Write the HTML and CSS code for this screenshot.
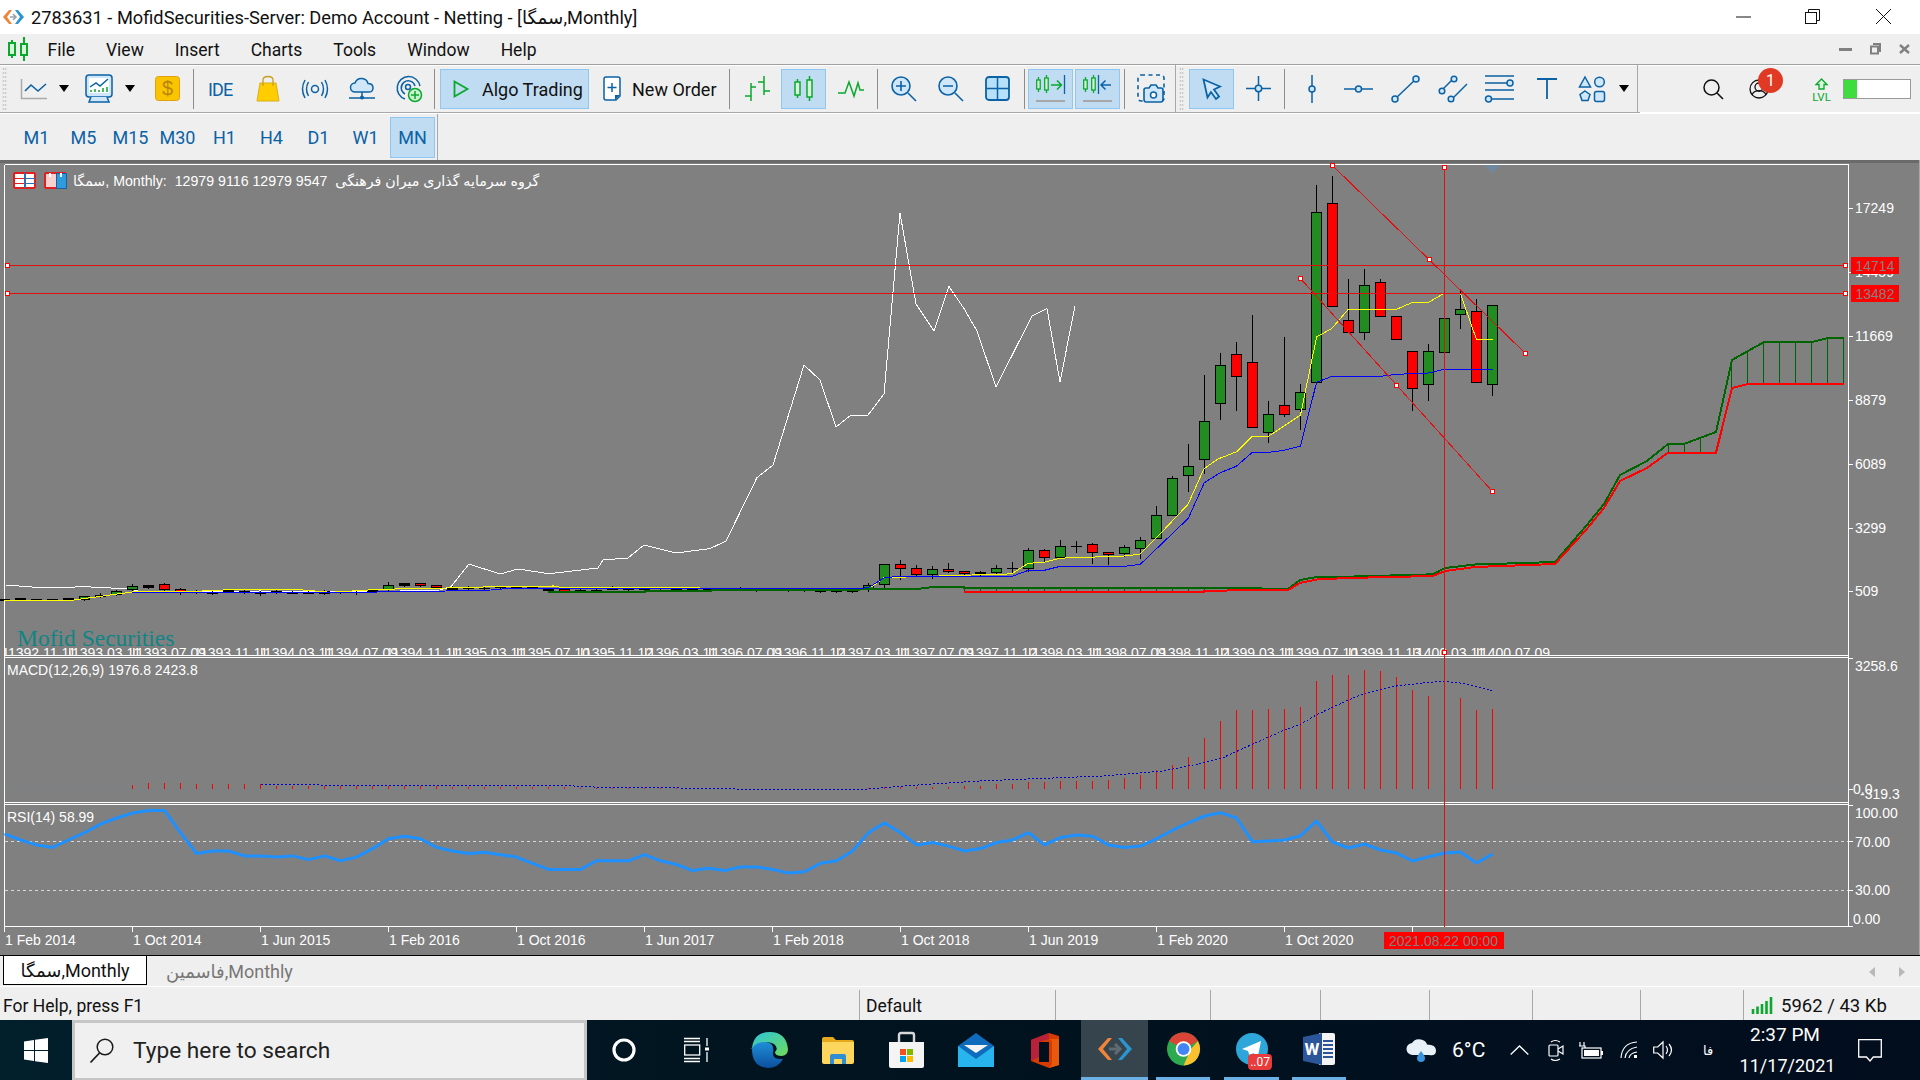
FILE: index.html
```html
<!DOCTYPE html>
<html lang="en">
<head>
<meta charset="utf-8">
<title>MetaTrader 5</title>
<link rel="stylesheet" href="styles.css">
</head>
<body>
<div class="app">

<header class="titlebar">
  <svg class="ml2" width="23" height="16" viewBox="0 0 23 16"><path d="M7 1 1 8l6 7h3L5 8l5-7z" fill="#f0853a"/><path d="M16 1l6 7-6 7h-3l5-7-5-7z" fill="#2c94cf"/><path d="M8 8h6M11 5l3 3-3 3" stroke="#9aa3aa" stroke-width="1.6" fill="none"/></svg>
  <span class="title-text">2783631 - MofidSecurities-Server: Demo Account - Netting - [سمگا,Monthly]</span>
  <svg class="win-min" width="15" height="2" viewBox="0 0 15 2"><path d="M0 1h15" stroke="#111"/></svg>
  <svg class="win-max" width="15" height="15" viewBox="0 0 15 15"><rect x=".5" y="3.5" width="11" height="11" fill="#fff" stroke="#111"/><path d="M3.5 3V.5h11v11H12" fill="none" stroke="#111"/></svg>
  <svg class="win-close" width="15" height="15" viewBox="0 0 15 15"><path d="M0 0l15 15M15 0 0 15" stroke="#111"/></svg>
</header>

<nav class="menubar">
  <svg class="menu-logo" width="20" height="24" viewBox="0 0 20 24"><g fill="none" stroke="#0aa82d" stroke-width="2"><rect x="1" y="6" width="6" height="12" fill="#d8f5dc"/><rect x="13" y="7" width="6" height="11" fill="#d8f5dc"/><path d="M4 3v3M4 18v3M16 0v7M16 18v6"/></g></svg>
  <div class="menu-items"><span>File</span><span>View</span><span>Insert</span><span>Charts</span><span>Tools</span><span>Window</span><span>Help</span></div>
  <div class="mdi">
    <svg width="13" height="3" viewBox="0 0 13 3"><rect width="13" height="3" fill="#808080"/></svg>
    <svg class="mdi-max" width="11" height="12" viewBox="0 0 11 12"><path d="M3 1h7v8M1 3.500h7v7H1z" fill="none" stroke="#808080" stroke-width="2"/></svg>
    <svg class="mdi-close" width="11" height="10" viewBox="0 0 11 10"><path d="M1 1l9 8M10 1l-9 8" stroke="#808080" stroke-width="2.400"/></svg>
  </div>
</nav>

<section class="toolbar">
  <div class="tools">
    <i class="grip ml2"></i>
    <svg class="ml14" width="26" height="20" viewBox="0 0 26 20"><path d="M.5 0v19.500H26" fill="none" stroke="#aaa" stroke-width="1.500"/><path d="M4 12l6-6 7 6 8-7" fill="none" stroke="#0b62a5" stroke-width="1.600"/></svg>
    <i class="drop ml12"></i>
    <svg class="ml16" width="28" height="29" viewBox="0 0 28 29"><rect x="1" y="1" width="26" height="22" rx="3" fill="#cfe7f8" stroke="#0b62a5" stroke-width="1.500"/><rect x="4" y="4" width="20" height="15" fill="#fff"/><path d="M5 13l6-4 4 3 8-7" fill="none" stroke="#0b62a5" stroke-width="1.500"/><path d="M6 16v2M10 15v3M14 16v2M18 14v4M22 13v5" stroke="#0aa82d" stroke-width="1.500"/><path d="M6 23l-2 5h20l-2-5" fill="#cfe7f8" stroke="#0b62a5" stroke-width="1.500"/></svg>
    <i class="drop ml12"></i>
    <svg class="ml20" width="25" height="25" viewBox="0 0 25 25"><rect x=".5" y=".5" width="24" height="24" rx="3" fill="#fbc400" stroke="#e0a010"/><text class="dollar" x="12.500" y="19">$</text></svg>
    <i class="sep ml13"></i>
    <span class="ide ml14">IDE</span>
    <svg class="ml24" width="22" height="25" viewBox="0 0 22 25"><path d="M3 7h16l3 18H0z" fill="#ffcd00" stroke="#d9ae1a"/><path d="M6 10V4q0-3.500 5-3.500T16 4v6" fill="none" stroke="#c8a020" stroke-width="1.300"/></svg>
    <svg class="ml23" width="26" height="18" viewBox="0 0 26 18"><g fill="none" stroke="#0b62a5" stroke-width="1.500"><circle cx="13" cy="9" r="3.500"/><path d="M6.500 2q-4 7 0 14M19.500 2q4 7 0 14M3 0q-5 9 0 18M23 0q5 9 0 18"/></g></svg>
    <svg class="ml21" width="26" height="22" viewBox="0 0 26 22"><path d="M6 14a4.500 4.500 0 0 1 0-9q2-5 7-4.500 5 .5 6 5 5 0 5 4.500T19 14z" fill="#cfe7f8" stroke="#0b62a5" stroke-width="1.500"/><path d="M13 14v4M0 20h26" stroke="#0b62a5" stroke-width="1.500"/><circle cx="13" cy="19.500" r="2" fill="#0b62a5"/></svg>
    <svg class="ml21" width="26" height="27" viewBox="0 0 26 27"><g fill="none" stroke="#0b62a5" stroke-width="1.500"><path d="M9 24A11.500 11.500 0 1 1 24 11"/><path d="M9 19A7 7 0 1 1 19 11"/><circle cx="12" cy="12" r="2.500"/></g><circle cx="19" cy="20" r="6.500" fill="#c9f1cf" stroke="#0aa82d" stroke-width="1.500"/><path d="M19 16v8M15 20h8" stroke="#0aa82d" stroke-width="1.500"/></svg>
    <i class="sep ml12"></i>
    <div class="algo ml5"><svg width="16" height="18" viewBox="0 0 16 18"><path d="M1.500 1.500v15l13-7.500z" fill="none" stroke="#0aa82d" stroke-width="1.800"/></svg><span>Algo Trading</span></div>
    <svg class="ml14" width="18" height="25" viewBox="0 0 18 25"><path d="M3 1h12q2 0 2 2v17l-4 4H3q-2 0-2-2V3q0-2 2-2z" fill="#fff" stroke="#0b62a5" stroke-width="1.500"/><path d="M9 7v9M4.500 11.500h9" stroke="#0b62a5" stroke-width="1.500"/><path d="M17 19l-5 5v-5z" fill="#0b62a5"/></svg>
    <span class="label ml11">New Order</span>
    <i class="sep ml12"></i>
    <svg class="ml14" width="26" height="25" viewBox="0 0 26 25"><path d="M7 7v18M1 20h6M7 11h5M20 0v19M14 6h6M20 15h6" fill="none" stroke="#0aa82d" stroke-width="1.500"/></svg>
    <div class="active ml11"><svg width="19" height="25" viewBox="0 0 19 25"><g fill="#d8f7dc" stroke="#0aa82d" stroke-width="1.500"><path d="M3.500 3v19M15.500 0v25"/><rect x="1" y="6" width="5" height="13"/><rect x="13" y="4" width="5" height="17"/></g></svg></div>
    <svg class="ml12" width="26" height="17" viewBox="0 0 26 17"><path d="M0 13h4l3 0 4-11 5 14 4-13 2 7h4" fill="none" stroke="#0aa82d" stroke-width="1.500"/></svg>
    <i class="sep ml13"></i>
    <svg class="ml13" width="26" height="25" viewBox="0 0 26 25"><circle cx="10" cy="10" r="9" fill="#cfe7f8" stroke="#0b62a5" stroke-width="1.600"/><path d="M10 5v10M5 10h10M17 17l8 8" stroke="#0b62a5" stroke-width="1.600"/></svg>
    <svg class="ml21" width="26" height="25" viewBox="0 0 26 25"><circle cx="10" cy="10" r="9" fill="#cfe7f8" stroke="#0b62a5" stroke-width="1.600"/><path d="M5 10h10M17 17l8 8" stroke="#0b62a5" stroke-width="1.600"/></svg>
    <svg class="ml21" width="25" height="25" viewBox="0 0 25 25"><rect x="1" y="1" width="23" height="23" rx="3" fill="#b7e0fb" stroke="#0b62a5" stroke-width="1.800"/><path d="M12.500 1v23M1 12.500h23" stroke="#0b62a5" stroke-width="1.500"/></svg>
    <i class="sep ml14"></i>
    <div class="active ml3"><svg width="29" height="27" viewBox="0 0 29 27"><g fill="#d8f7dc" stroke="#0aa82d" stroke-width="1.300"><path d="M2.500 2v15M10.500 0v18"/><rect x=".7" y="5" width="3.500" height="9"/><rect x="8.700" y="3" width="3.500" height="12"/></g><path d="M15 10h10M21 5.500l4.500 4.500-4.500 4.500" fill="none" stroke="#0aa82d" stroke-width="1.500"/><path d="M28.500 0v19" stroke="#0b62a5" stroke-width="1.300"/><path d="M0 26h29" stroke="#a8a8a8" stroke-width="2"/></svg></div>
    <div class="active ml2"><svg width="29" height="27" viewBox="0 0 29 27"><g fill="#d8f7dc" stroke="#0aa82d" stroke-width="1.300"><path d="M2.500 2v15M10.500 0v18"/><rect x=".7" y="5" width="3.500" height="9"/><rect x="8.700" y="3" width="3.500" height="12"/></g><path d="M18 10h10M22.500 5.500 18 10l4.500 4.500" fill="none" stroke="#0b62a5" stroke-width="1.500"/><path d="M15.500 0v19" stroke="#0b62a5" stroke-width="1.300"/><path d="M0 26h29" stroke="#a8a8a8" stroke-width="2"/></svg></div>
    <i class="sep ml4"></i>
    <svg class="ml12" width="28" height="29" viewBox="0 0 28 29"><rect x="1" y="1" width="26" height="26" rx="3" fill="none" stroke="#0b62a5" stroke-width="1.600" stroke-dasharray="4 3.500"/><path d="M9 14h3l2-3h5l2 3h3q2 0 2 2v9q0 3-2 3H9q-2 0-2-3v-9q0-2 2-2z" fill="#cfe7f8" stroke="#0b62a5" stroke-width="1.600"/><circle cx="16.500" cy="21" r="3" fill="#fff" stroke="#0b62a5" stroke-width="1.500"/></svg>
    <i class="tool-end ml10"></i>
    <i class="grip ml3"></i>
    <div class="active ml5"><svg width="20" height="22" viewBox="0 0 20 22"><path d="M1.500 1.500 18 8.500l-6 3 5 7-3 2.500-5-7-3.500 5.500z" fill="#cfe7f8" stroke="#0b62a5" stroke-width="1.800"/></svg></div>
    <svg class="ml12" width="25" height="25" viewBox="0 0 25 25"><path d="M12.500 0v9M12.500 16v9M0 12.500h9M16 12.500h9" stroke="#0b62a5" stroke-width="1.500"/><circle cx="12.500" cy="12.500" r="3.200" fill="#cfe7f8" stroke="#0b62a5" stroke-width="1.500"/></svg>
    <i class="sep ml13"></i>
    <svg class="ml14" width="26" height="28" viewBox="0 0 26 28"><path d="M13 0v28" stroke="#0b62a5" stroke-width="1.500"/><circle cx="13" cy="14" r="3" fill="#cfe7f8" stroke="#0b62a5" stroke-width="1.500"/></svg>
    <svg class="ml19" width="29" height="8" viewBox="0 0 29 8"><path d="M0 4h29" stroke="#0b62a5" stroke-width="1.500"/><circle cx="14.500" cy="4" r="3" fill="#cfe7f8" stroke="#0b62a5" stroke-width="1.500"/></svg>
    <svg class="ml18" width="29" height="28" viewBox="0 0 29 28"><path d="M4 24 25 4" stroke="#0b62a5" stroke-width="1.500"/><g fill="#cfe7f8" stroke="#0b62a5" stroke-width="1.500"><circle cx="4" cy="24" r="3"/><circle cx="25" cy="4" r="3"/></g></svg>
    <svg class="ml19" width="28" height="28" viewBox="0 0 28 28"><path d="M3 15 14 4M12 25 28 9" stroke="#0b62a5" stroke-width="1.500"/><g fill="#cfe7f8" stroke="#0b62a5" stroke-width="1.500"><circle cx="3" cy="16" r="2.800"/><circle cx="15" cy="4" r="2.800"/><circle cx="12" cy="24" r="2.800"/></g></svg>
    <svg class="ml18" width="29" height="28" viewBox="0 0 29 28"><path d="M0 1h29M0 8h26M0 15h29M6 24h23" stroke="#0b62a5" stroke-width="1.500"/><g fill="#cfe7f8" stroke="#0b62a5" stroke-width="1.500"><circle cx="25" cy="8" r="3"/><circle cx="3.500" cy="24" r="3"/></g></svg>
    <svg class="ml23" width="20" height="21" viewBox="0 0 20 21"><path d="M0 1h20M10 1v20" stroke="#0b62a5" stroke-width="1.800"/></svg>
    <svg class="ml22" width="26" height="26" viewBox="0 0 26 26"><g fill="#cfe7f8" stroke="#0b62a5" stroke-width="1.500"><path d="M6 1l5.500 10H.5z"/><circle cx="20.500" cy="6" r="4.800"/><path d="M6 15l5 3.500-2 6H3l-2-6z"/><rect x="15.500" y="15.500" width="10" height="10" rx="2"/></g></svg>
    <i class="drop ml14"></i>
    <i class="tool-end ml8"></i>
  </div>
  <svg class="ml63" width="20" height="20" viewBox="0 0 20 20"><circle cx="8.500" cy="8.500" r="7.500" fill="none" stroke="#111" stroke-width="1.500"/><path d="M14 14l6 6" stroke="#111" stroke-width="1.600"/></svg>
  <div class="user ml26">
    <svg width="20" height="20" viewBox="0 0 20 20"><g fill="none" stroke="#111" stroke-width="1.300"><circle cx="10" cy="10" r="9"/><circle cx="10" cy="8" r="4"/><path d="M3 16q2-5 7-4 5-1 7 4"/></g></svg>
    <span class="badge">1</span>
  </div>
  <svg class="ml43" width="19" height="23" viewBox="0 0 19 23"><path d="M9.500 1 4 6.500h3V11h5V6.500h3z" fill="#d8f7dc" stroke="#0aa82d" stroke-width="1.300"/><text class="lvl" x="9.500" y="22.500">LVL</text></svg>
  <div class="level ml12"><i></i></div>
</section>

<section class="tfbar">
  <div class="tf-items"><span>M1</span><span>M5</span><span>M15</span><span>M30</span><span>H1</span><span>H4</span><span>D1</span><span>W1</span><span class="tf-on">MN</span></div>
  <i class="tf-end"></i>
</section>

<main class="chart">
<svg id="plot" class="plot" width="1920" height="795" viewBox="0 160 1920 795">
  <defs><clipPath id="clip-dates"><rect x="5" y="640" width="1843" height="15"/></clipPath></defs>
  <rect x="0" y="160" width="1920" height="3" fill="#6a6a6a"/>
  <path d="M1919.500 160v795" stroke="#a8a8a8"/>

  <!-- time strip of the main pane -->
  <g class="lbl" clip-path="url(#clip-dates)">
    <text x="8" y="658">1392.11.11</text><text x="72" y="658">1393.03.11</text><text x="136" y="658">1393.07.09</text><text x="200" y="658">1393.11.11</text><text x="264" y="658">1394.03.11</text><text x="328" y="658">1394.07.09</text><text x="392" y="658">1394.11.11</text><text x="456" y="658">1395.03.11</text><text x="520" y="658">1395.07.10</text><text x="584" y="658">1395.11.12</text><text x="648" y="658">1396.03.11</text><text x="712" y="658">1396.07.09</text><text x="776" y="658">1396.11.12</text><text x="840" y="658">1397.03.11</text><text x="904" y="658">1397.07.09</text><text x="968" y="658">1397.11.12</text><text x="1032" y="658">1398.03.11</text><text x="1096" y="658">1398.07.09</text><text x="1160" y="658">1398.11.12</text><text x="1224" y="658">1399.03.11</text><text x="1288" y="658">1399.07.10</text><text x="1352" y="658">1399.11.13</text><text x="1416" y="658">1400.03.11</text><text x="1480" y="658">1400.07.09</text>
  </g>
  <g id="strip-ticks"></g>

  <!-- pane frames -->
  <path class="frame" d="M4.500 164.500H1848.500V927M4.500 164.500V927M4 655.500h1845M4 657.500h1845M4 802.500h1845M4 804.500h1845M4 926.500h1845"/>
  <path class="frame" d="M1848 208.500h5M1848 272.500h5M1848 336.500h5M1848 400.500h5M1848 464.500h5M1848 528.500h5M1848 591.500h5M1848 658.500h5M1848 789.500h5M1848 805.500h5M1848 841.500h5M1848 890.500h5M1848 926.500h5"/>
  <path class="frame" d="M4.500 927v5M132.500 927v5M260.500 927v5M388.500 927v5M516.500 927v5M644.500 927v5M772.500 927v5M900.500 927v5M1028.500 927v5M1156.500 927v5M1284.500 927v5M1412.500 927v5"/>

  <!-- indicator levels -->
  <path class="zero" d="M5 789.500h1843"/>
  <path class="level-line" d="M5 841.500h1843M5 890.500h1843"/>

  <!-- comparison symbol -->
  <polyline class="ln white" points="6,585 45,588 85,586.700 130,589 138,591 187,592 260,591 330,592 400,591 440,590 451,586.700 469,564 500,574 518,569 549,573.700 598,568 603,560 628,558 644,545 676,553 710,548.600 726,541 757,477.600 773,465 804,365 820,380 836,427 851,415 868,415 884,394 900,213 916,304 934,331 949,286.500 964,308.600 977,331 996,387 1032,316 1047,308.600 1060,382 1075,306"/>

  <g id="candles"></g>

  <!-- ichimoku cloud -->
  <path class="hatch" d="M964.500 588v4M980.500 588v4M996.500 588v4M1012.500 588v4M1028.500 588v4M1044.500 588v4M1060.500 588v4M1076.500 588v4M1092.500 588v4M1108.500 588v4M1124.500 588v4M1140.500 588v4M1156.500 588v4M1172.500 588v4M1188.500 588v4M1204.500 588v4M1668.500 444v9M1684.500 444v9M1700.500 438v15M1731.500 360v28M1747.500 351v33M1763.500 342v42M1779.500 342v42M1795.500 342v42M1811.500 342v42M1827.500 338v46M1843.500 338v46"/>
  <polyline class="cloud dark" points="548,592 645,592 645,591 780,590 860,589.500 917,589 933,587 964,587 964,587.700 1220,587.700 1288,589 1300,580 1316.700,577 1347,576.700 1433,574.300 1445,568 1475,564.500 1555,562 1586,526 1604,504 1620,475 1647,461 1668,444 1684,444 1716,432 1732,360 1748,351 1764,342 1812,342 1828,338 1844,337.700"/>
  <polyline class="cloud bright" points="964,592 1204,592 1204,590.700 1288,590 1300,583 1316.700,579.500 1347,578 1433,576 1445,571 1475,567 1555,564 1586,530 1604,508 1620,481 1647,468 1668,452.700 1716,452.700 1732,388 1748,384 1844,384"/>

  <!-- moving averages -->
  <polyline class="ln yellow" points="4,600 74,600 132,592 187,591.700 223,590 257,589.300 295,589.300 330,592.300 380,589.300 446,588 509,586.300 554,586 561,587.300 700,588 860,589 873,586 884,577.700 972,575 1003,574.300 1012,573.700 1028,563.300 1044,562.300 1060,558.300 1076,557.300 1116,556.700 1124,556 1140,554.300 1156,538.300 1188,504.300 1204,468.700 1218,459 1236.700,451.700 1252.300,436.300 1268.400,436.300 1300.500,415 1316.600,337 1332,328.300 1348.300,309.300 1396.500,309.300 1412.600,302.300 1428.600,302.300 1444.300,293.300"/>
  <polyline class="ln yellow" points="1460.300,293.300 1476.400,339.300 1492.500,339.300"/>
  <polyline class="ln blue" points="132,592 187,592 330,592.700 446,591 491,590 509,588.300 700,588.300 860,589 870,586.700 884.300,577.700 900.300,576.300 1012.300,576.300 1028.300,570.300 1044.300,570.300 1060.300,566.300 1124.300,566.300 1140.300,564.300 1188.300,518.300 1204.300,482.700 1220.300,472.700 1236.300,466.300 1252.300,452.300 1268.300,452.300 1284.300,450.300 1300.500,446 1316.600,382.300 1332,376.300 1380.400,376.300 1396.500,374.300 1428.600,373 1444.300,369.300 1492.500,369.300"/>

  <!-- MACD and RSI series -->
  <g id="macd"></g>
  <polyline class="ln signal" points="261,784 312,784.300 326,785.700 571,785.700 580,786.700 625,787.700 678,787.700 688,788.700 857,789.800 918,785 980,781 1102,776 1163,771 1200,763.700 1220.700,758.700 1252.300,744.300 1284.500,730 1300.500,724.300 1316.600,714.700 1348.300,700 1364.400,693.300 1380.400,689.300 1396.500,686 1428.600,682.300 1444.300,681.300 1460.300,683 1476.400,686.700 1492.500,691"/>
  <polyline id="rsi" class="rsi" points=""/>

  <!-- objects drawn on the chart -->
  <path class="obj" d="M5 265.500h1843M5 293.500h1843M1332 165 1525 353M1300 278 1492 491"/>
  <path class="cross" d="M1444.500 167V927"/>
  <path class="marker" d="M1485 165h15l-7.500 8z"/>
  <g id="handles"></g>

  <!-- price axis -->
  <g class="lbl">
    <text x="1855" y="213">17249</text><text x="1855" y="277">14459</text><text x="1855" y="341">11669</text><text x="1855" y="405">8879</text><text x="1855" y="469">6089</text><text x="1855" y="533">3299</text><text x="1855" y="596">509</text>
    <text x="1855" y="671">3258.6</text><text x="1853" y="794">0.0</text><text x="1860" y="799">-319.3</text>
    <text x="1855" y="818">100.00</text><text x="1855" y="847">70.00</text><text x="1855" y="895">30.00</text><text x="1853" y="924">0.00</text>
  </g>
  <rect class="tag" x="1851" y="257" width="48" height="17"/><text class="tag-text" x="1855.500" y="271">14714</text>
  <rect class="tag" x="1851" y="285" width="48" height="17"/><text class="tag-text" x="1855.500" y="299">13482</text>

  <!-- time axis -->
  <g class="lbl dates">
    <text x="5" y="945">1 Feb 2014</text><text x="133" y="945">1 Oct 2014</text><text x="261" y="945">1 Jun 2015</text><text x="389" y="945">1 Feb 2016</text><text x="517" y="945">1 Oct 2016</text><text x="645" y="945">1 Jun 2017</text><text x="773" y="945">1 Feb 2018</text><text x="901" y="945">1 Oct 2018</text><text x="1029" y="945">1 Jun 2019</text><text x="1157" y="945">1 Feb 2020</text><text x="1285" y="945">1 Oct 2020</text>
  </g>
  <rect class="tag" x="1384" y="932" width="120" height="17"/><text class="tag-text" x="1389" y="946">2021.08.22 00:00</text>

  <!-- headings -->
  <g>
    <rect x="14" y="173" width="21" height="15" rx="1" fill="#fff" stroke="#e02020" stroke-width="1.500"/><path d="M14 178h11M14 183h11" stroke="#e02020"/><path d="M25 178h10M25 183h10" stroke="#2b6fb5"/><path d="M25 173v15" stroke="#2b6fb5" stroke-width="1.500"/>
    <rect x="45" y="173" width="21" height="15" rx="1" fill="#f9d0d0" stroke="#e02020" stroke-width="1.500"/><rect x="56" y="173" width="10" height="15" fill="#2e9bdc" stroke="#1b5fa0"/><path d="M50 173v4M61 173v4" stroke="#fff" stroke-width="2"/>
  </g>
  <text class="lbl head" x="73" y="186">سمگا, Monthly:  12979 9116 12979 9547  گروه سرمایه گذاری میران فرهنگی</text>
  <text class="lbl" x="7" y="675">MACD(12,26,9) 1976.8 2423.8</text>
  <text class="lbl" x="7" y="822">RSI(14) 58.99</text>
  <text class="brand" x="17" y="646">Mofid Securities</text>
</svg>
</main>

<section class="tabs">
  <span class="tab tab-on">سمگا,Monthly</span>
  <span class="tab tab-off">فاسمین,Monthly</span>
  <svg class="tab-arrows" width="36" height="10" viewBox="0 0 36 10"><path d="M6 0v10L0 5zM30 0v10l6-5z" fill="#b8b8b8"/></svg>
</section>

<footer class="status">
  <span class="st st-help">For Help, press F1</span>
  <span class="st st-default">Default</span>
  <span class="st st-a"></span><span class="st st-b"></span><span class="st st-c"></span><span class="st st-d"></span><span class="st st-e"></span><span class="st st-f"></span>
  <span class="st st-net">
    <svg width="21" height="17" viewBox="0 0 21 17"><path d="M1 12v5M5.500 9.500V17M10 7v10M14.500 4v13M19 0v17" stroke="#0aa82d" stroke-width="2.600"/></svg>
    5962 / 43 Kb
  </span>
</footer>

<div class="taskbar">
  <svg class="ml24" width="24" height="25" viewBox="0 0 24 25"><path d="M0 3.500 10 2v10H0zM11 1.800 24 0v12H11zM0 13h10v10L0 21.500zM11 13h13v12l-13-1.800z" fill="#fff"/></svg>
  <div class="search ml24">
    <svg width="24" height="25" viewBox="0 0 24 25"><circle cx="15" cy="9" r="7.800" fill="none" stroke="#1a1a1a" stroke-width="1.500"/><path d="M9.500 15 .5 24.500" stroke="#1a1a1a" stroke-width="1.800"/></svg>
    <span>Type here to search</span>
  </div>
  <svg class="ml25" width="24" height="24" viewBox="0 0 24 24"><circle cx="12" cy="12" r="10" fill="none" stroke="#fff" stroke-width="3.200"/></svg>
  <svg class="ml48" width="25" height="24" viewBox="0 0 25 24"><g fill="none" stroke="#fff" stroke-width="1.300"><path d="M0 .5h16M0 23.500h16M0 3.500h16M0 20.500h16"/><rect x=".7" y="7" width="15" height="10"/><path d="M23 0v8M23 14v10"/></g><rect x="21" y="9.500" width="4" height="3" fill="#fff"/></svg>
  <svg class="ml42" width="37" height="36" viewBox="0 0 37 36"><defs><linearGradient id="edge-a" x1="0" y1="0" x2="1" y2="1"><stop offset="0" stop-color="#2cc3e0"/><stop offset="1" stop-color="#6fdc5a"/></linearGradient><linearGradient id="edge-b" x1="0" y1="0" x2="0" y2="1"><stop offset="0" stop-color="#1f8fd8"/><stop offset="1" stop-color="#0c4f9e"/></linearGradient></defs><path d="M1 17Q2 0 19 0q16 0 18 17 0 6-6 7-7 0-7-4 4-4-1-8-7-4-13 1-6 3-11 4z" fill="url(#edge-a)"/><path d="M1 17q3-7 12-7 11 0 9 10-1 8 10 7-5 9-15 9Q1 35 1 17z" fill="url(#edge-b)"/></svg>
  <svg class="ml34" width="32" height="27" viewBox="0 0 32 27"><path d="M0 2q0-2 2-2h9l3 3h16q2 0 2 2v3H0z" fill="#e6a81d"/><path d="M0 5h32v20q0 2-2 2H2q-2 0-2-2z" fill="#fdd65d"/><path d="M8 27v-8q0-2 2-2h12q2 0 2 2v8z" fill="#2f8ed3"/><path d="M12 27v-5h8v5z" fill="#fdd65d"/></svg>
  <svg class="ml35" width="35" height="36" viewBox="0 0 35 36"><path d="M10 12V3q0-2 2-2h11q2 0 2 2v9" fill="none" stroke="#d8d8d8" stroke-width="2.400"/><path d="M0 10h35v24q0 2-2 2H2q-2 0-2-2z" fill="#f4f4f4"/><rect x="11" y="17" width="6" height="6" fill="#f25022"/><rect x="18" y="17" width="6" height="6" fill="#7fba00"/><rect x="11" y="24" width="6" height="6" fill="#00a4ef"/><rect x="18" y="24" width="6" height="6" fill="#ffb900"/></svg>
  <svg class="ml34" width="36" height="34" viewBox="0 0 36 34"><path d="M18 0l18 13v21H0V13z" fill="#0f6cbd"/><path d="M0 13l18 13 18-13v21H0z" fill="#28b4ec"/><path d="M6 12h24l-12 8z" fill="#f4f4f4"/></svg>
  <svg class="ml37" width="28" height="35" viewBox="0 0 28 35"><path d="M18 0 0 7v21l18 7 10-3V3z" fill="#d83b01"/><path d="M18 0v6L8 9v15l-8 4V7z" fill="#b7223a"/><path d="M8 9h10v20H8z" fill="#020f1c"/><path d="M18 6h10v26l-10 3 3-4V8z" fill="#e8590c"/></svg>
  <div class="task on ml22">
    <svg width="36" height="24" viewBox="0 0 36 24"><path d="M11 1 1 12l10 11h4L6 12l9-11z" fill="#f0853a"/><path d="M25 1l10 11-10 11h-4l9-11-9-11z" fill="#2c94cf"/><path d="M12 12h11M18 7l5 5-5 5" stroke="#5f6b73" stroke-width="3" fill="none"/></svg>
  </div>
  <div class="task run ml8">
    <svg width="33" height="34" viewBox="0 0 33 34"><circle cx="16.500" cy="17" r="16.500" fill="#2da94f"/><path d="M16.500.5A16.500 16.500 0 0 1 31 9L16.500 17 2 9A16.500 16.500 0 0 1 16.500.5z" fill="#db4437"/><path d="M31 9a16.500 16.500 0 0 1-14.500 24.500L24 17z" fill="#fbc02d"/><circle cx="16.500" cy="17" r="7.800" fill="#fff"/><circle cx="16.500" cy="17" r="6" fill="#4285f4"/></svg>
  </div>
  <div class="task run tele ml14">
    <svg width="32" height="32" viewBox="0 0 32 32"><circle cx="16" cy="16" r="16" fill="#2ea6da"/><path d="M25 8 6 16l6 2 2 6 3-4 5 3z" fill="#fff"/></svg>
    <span class="tele-badge">..07</span>
  </div>
  <div class="task run word ml13">
    <svg width="32" height="32" viewBox="0 0 32 32"><path d="M16 0h14q2 0 2 2v28q0 2-2 2H16z" fill="#f4f4f4"/><path d="M20 8h10M20 12h10M20 16h10M20 20h10M20 24h10" stroke="#2b5797" stroke-width="2"/><path d="M0 4 19 0v32L0 28z" fill="#2b579a"/><text class="word-w" x="9" y="22">W</text></svg>
  </div>
  <svg class="ml60" width="30" height="23" viewBox="0 0 30 23"><path d="M7 16a6 6 0 0 1-1-12q3-5 9-3.500 5 1 6 5 9 0 9 6t-7 4.500z" fill="#e8f1f7"/><path d="M15 12q4 5 4 7a4 4 0 0 1-8 0q0-2 4-7z" fill="#3a94dd"/></svg>
  <span class="tray-temp ml16">6°C</span>
  <svg class="ml26" width="19" height="10" viewBox="0 0 19 10"><path d="M.7 9.500 9.500 1l8.800 8.500" fill="none" stroke="#fff" stroke-width="1.300"/></svg>
  <svg class="ml19" width="16" height="22" viewBox="0 0 16 22"><g fill="none" stroke="#fff" stroke-width="1.200"><rect x="1" y="6" width="9" height="11" rx="1"/><path d="M10 10l5-3v8l-5-3M3 3Q7 0 12 3M3 20q4 3 9 0"/></g></svg>
  <svg class="ml15" width="24" height="17" viewBox="0 0 24 17"><g fill="none" stroke="#fff" stroke-width="1.200"><rect x="3" y="6" width="19" height="10"/><path d="M1 0v4M5 0v4M0 4h6v2M3 6"/></g><rect x="5" y="8" width="15" height="6" fill="#fff"/><rect x="22" y="9" width="2" height="4" fill="#fff"/></svg>
  <svg class="ml17" width="18" height="18" viewBox="0 0 18 18"><g fill="none" stroke="#fff" stroke-width="1.200"><path d="M1 17Q2 2 17 1M5 17q1-9 12-11M9 17q1-5 8-6"/></g><rect x="14" y="14" width="3" height="3" fill="#fff"/></svg>
  <svg class="ml15" width="21" height="18" viewBox="0 0 21 18"><g fill="none" stroke="#fff" stroke-width="1.200"><path d="M.7 6h4L10 1v16l-5.300-5h-4zM13 5q3 4 0 8M16 3q5 6 0 12"/></g></svg>
  <span class="tray-lang ml29">فا</span>
  <div class="clock ml27"><span class="clock-time">2:37 PM</span><span>11/17/2021</span></div>
  <svg class="ml25" width="24" height="23" viewBox="0 0 24 23"><path d="M.7.700h22.600v17.300h-8L12 22l-3.500-4H.7z" fill="none" stroke="#fff" stroke-width="1.300"/></svg>
</div>

</div>
<script src="chart.js"></script>
</body>
</html>
```

FILE: styles.css
```css
* { box-sizing: border-box; }
html, body { margin: 0; padding: 0; }
body { background: #efefef; font-family: Roboto, "DejaVu Sans", sans-serif; color: #111; }
.app { width: 1920px; height: 1080px; display: flex; flex-direction: column; overflow: hidden; }
svg { display: block; flex: none; overflow: visible; }
i { display: block; flex: none; }

.ml2 { margin-left: 2px; } .ml3 { margin-left: 3px; } .ml4 { margin-left: 4px; } .ml5 { margin-left: 5px; }
.ml8 { margin-left: 8px; } .ml10 { margin-left: 10px; } .ml11 { margin-left: 11px; } .ml12 { margin-left: 12px; }
.ml13 { margin-left: 13px; } .ml14 { margin-left: 14px; } .ml15 { margin-left: 15px; } .ml16 { margin-left: 16px; }
.ml17 { margin-left: 17px; } .ml18 { margin-left: 18px; } .ml19 { margin-left: 19px; } .ml20 { margin-left: 20px; }
.ml21 { margin-left: 21px; } .ml22 { margin-left: 22px; } .ml23 { margin-left: 23px; } .ml24 { margin-left: 24px; }
.ml25 { margin-left: 25px; } .ml26 { margin-left: 26px; } .ml27 { margin-left: 27px; } .ml29 { margin-left: 29px; }
.ml34 { margin-left: 34px; } .ml35 { margin-left: 35px; } .ml37 { margin-left: 37px; } .ml42 { margin-left: 42px; }
.ml43 { margin-left: 43px; } .ml48 { margin-left: 48px; } .ml60 { margin-left: 60px; } .ml63 { margin-left: 63px; }

/* title bar */
.titlebar { height: 34px; flex: none; background: #fff; display: flex; align-items: center; padding-right: 29px; }
.title-text { margin-left: 6px; font-size: 18.250px; white-space: nowrap; }
.win-min { margin-left: auto; }
.win-max { margin-left: 54px; margin-top: -2px; }
.win-close { margin-left: 56px; margin-top: -2px; }

/* menu */
.menubar { height: 31px; flex: none; display: flex; align-items: center; background: #efefef; border-bottom: 1px solid #a0a0a0; position: relative; }
.menu-logo { margin-left: 8px; }
.menu-items { display: flex; gap: 31px; margin-left: 19.500px; padding-top: 1px; font-size: 17.500px; }
.mdi { display: flex; align-items: center; margin-left: auto; margin-right: 10px; gap: 18px; }
.mdi-close { margin-left: 0; }

/* tool rows */
.toolbar { height: 48px; flex: none; display: flex; align-items: center; background: #efefef; border-top: 1px solid #fff; border-bottom: 1px solid #fff; }
.tools { width: 1640px; height: 47px; flex: none; display: flex; align-items: center; border-bottom: 1px solid #a8a8a8; }
.grip { width: 5px; height: 44px; background: radial-gradient(circle, #bdbdbd 0.8px, transparent 1px) 0 0 / 2.500px 4px; }
.drop { width: 0; height: 0; border-left: 5.500px solid transparent; border-right: 5.500px solid transparent; border-top: 7px solid #000; }
.sep { width: 1px; height: 40px; background: #8c8c8c; }
.tool-end { width: 1px; height: 47px; background: #a8a8a8; }
.ide { font-size: 18px; color: #0b62a5; width: 25px; white-space: nowrap; letter-spacing: -0.800px; padding-top: 2px; }
.label { font-size: 18px; width: 85px; white-space: nowrap; padding-top: 2px; }
.algo { width: 149px; height: 40px; flex: none; background: #bfdcf2; border: 1px solid #8fc7f2; display: flex; align-items: center; padding-left: 12px; gap: 13px; font-size: 18px; white-space: nowrap; }
.algo span { padding-top: 2px; }
.active { width: 45px; height: 40px; flex: none; background: #bfdcf2; border: 1px solid #8fc7f2; display: flex; align-items: center; justify-content: center; }
.user { position: relative; width: 20px; height: 20px; flex: none; }
.badge { position: absolute; left: 9px; top: -11px; width: 25px; height: 25px; border-radius: 50%; background: #e03a24; color: #fff; font-size: 16px; display: flex; align-items: center; justify-content: center; }
.lvl { font-size: 11.500px; fill: #0aa82d; text-anchor: middle; }
.dollar { font-size: 20px; fill: #b8860b; text-anchor: middle; font-family: "Liberation Sans", sans-serif; }
.level { width: 68px; height: 20px; flex: none; background: #fff; border: 1px solid #9a9a9a; }
.level i { width: 13px; height: 18px; background: #3fdc3f; }

.tfbar { height: 47px; flex: none; display: flex; align-items: center; background: #efefef; border-top: 1px solid #fff; }
.tf-items { display: grid; grid-template-columns: repeat(9, 45px); column-gap: 2px; margin-left: 14px; font-size: 18px; color: #0b62a5; }
.tf-items span { height: 41px; display: flex; align-items: center; justify-content: center; border: 1px solid transparent; }
.tf-items .tf-on { background: #bfdcf2; border-color: #8fc7f2; }
.tf-end { width: 1px; height: 46px; background: #a8a8a8; margin-left: 2px; }

/* chart */
.chart { height: 795px; flex: none; background: #808080; }
.plot { shape-rendering: crispEdges; }
.plot text { white-space: pre; }
.frame { fill: none; stroke: #fff; stroke-width: 1; }
.lbl { font-family: "Liberation Sans", "DejaVu Sans", sans-serif; font-size: 14px; fill: #fff; }
.dates { font-size: 14px; }
.head { font-size: 14.200px; }
.brand { font-family: "Liberation Serif", serif; font-size: 23.500px; fill: #0f8585; }
.tag { fill: #ff0000; }
.tag-text { font-family: "Liberation Sans", sans-serif; font-size: 14px; fill: #808080; }
.zero { fill: none; stroke: #74808c; stroke-dasharray: 2 2; }
.level-line { fill: none; stroke: #d8d8d8; stroke-dasharray: 3 3; }
.ln { fill: none; stroke-width: 1; }
.white { stroke: #fff; }
.yellow { stroke: #ffff00; }
.blue { stroke: #0000ff; }
.signal { stroke: #0000c8; stroke-dasharray: 2 2; }
.cloud { fill: none; stroke-width: 2; }
.dark { stroke: #006400; }
.bright { stroke: #ff0000; }
.hatch { fill: none; stroke: #006400; stroke-width: 1.500; }
.wick { stroke: #000; stroke-width: 1; fill: none; }
.body-g { fill: #228b22; stroke: #000; stroke-width: 1; }
.body-r { fill: #ff0000; stroke: #000; stroke-width: 1; }
.body-k { fill: #000; stroke: #000; stroke-width: 1; }
.hist { stroke: #ff0000; stroke-width: 1; fill: none; }
.rsi { fill: none; stroke: #1e90ff; stroke-width: 3; stroke-linejoin: round; shape-rendering: auto; }
.obj { fill: none; stroke: #e01010; stroke-width: 1; }
.cross { fill: none; stroke: #e01010; stroke-width: 1; }
.marker { fill: #6f88a0; stroke: none; }
.handle { fill: #fff; stroke: #ff0000; stroke-width: 1; }
.tick-a { fill: #e6ecf4; }
.tick-b { fill: #eec9a4; }

/* tabs and status */
.tabs { height: 32px; flex: none; display: flex; background: #efefef; border-top: 1px solid #000; border-bottom: 1px solid #fff; position: relative; }
.tab { font-size: 18px; white-space: nowrap; display: flex; align-items: center; padding-top: 1px; }
.tab-on { width: 144px; height: 29px; margin-left: 3px; background: #fff; border: 1px solid #000; border-top: none; justify-content: center; }
.tab-off { margin-left: 19px; color: #777; height: 29px; padding-top: 2px; }
.tab-arrows { position: absolute; left: 1869px; top: 11px; }
.status { height: 33px; flex: none; display: flex; align-items: stretch; background: #efefef; font-size: 17.500px; padding-top: 3px; }
.st { border-right: 1px solid #a8a8a8; display: flex; align-items: center; white-space: nowrap; flex: none; height: 30px; padding-top: 1px; }
.st-help { width: 860px; padding-left: 3px; }
.st-default { width: 196px; padding-left: 6px; }
.st-a { width: 155px; } .st-b { width: 110px; } .st-c { width: 109px; } .st-d { width: 103px; } .st-e { width: 108px; } .st-f { width: 103px; }
.st-net { border: none; padding-left: 8px; gap: 8px; font-size: 18.500px; }

/* taskbar */
.taskbar { height: 60px; flex: none; display: flex; align-items: center; background: linear-gradient(90deg, #021f2c, #01141f 40%, #020d1e); color: #fff; }
.search { width: 515px; height: 60px; flex: none; background: #f0f0f0; border: 3px solid #c6c6c6; border-bottom-width: 2px; display: flex; align-items: center; padding-left: 15px; gap: 19px; color: #222; font-size: 22.700px; }
.task { height: 60px; flex: none; display: flex; align-items: center; justify-content: center; position: relative; }
.task.on { width: 67px; background: #36444e; border-bottom: 3px solid #6cb1e6; }
.task.run { width: 54px; border-bottom: 3px solid #6cb1e6; }
.tele { width: 55px !important; }
.tele-badge { position: absolute; right: 7px; top: 34px; min-width: 22px; height: 16px; padding: 0 2px; background: #e83b3b; border-radius: 4px; color: #fff; font-size: 12px; display: flex; align-items: center; justify-content: center; }
.word-w { font-size: 17px; font-weight: 700; fill: #fff; text-anchor: middle; font-family: Roboto, sans-serif; }
.tray-temp { font-size: 21px; width: 32px; white-space: nowrap; }
.tray-lang { font-family: "DejaVu Sans", sans-serif; font-size: 13px; width: 12px; white-space: nowrap; }
.clock { width: 91px; flex: none; display: flex; flex-direction: column; align-items: center; gap: 9px; font-size: 18px; white-space: nowrap; margin-top: -2px; }
.clock-time { font-size: 19px; margin-right: 5px; }
```

FILE: chart.js
```js
(function () {
  var NS = 'http://www.w3.org/2000/svg';
  function el(parent, name, attrs) {
    var node = document.createElementNS(NS, name);
    for (var key in attrs) node.setAttribute(key, attrs[key]);
    parent.appendChild(node);
    return node;
  }
  function cx(n) { return 4 + 16 * n; }

  // [index, bodyTop, bodyBottom, high, low, colour]
  var bars = [
    [0,599,600,599,600,'k'],[1,598,600,598,600,'k'],[2,599,600,599,600,'k'],[3,599,600,599,600,'k'],[4,598,600,598,600,'k'],
    [5,596,599,596,600,'g'],[6,595,596,593,597,'k'],[7,591,594,590,595,'g'],[8,586,589,584,590,'g'],[9,585,587,585,588,'k'],
    [10,584,589,583,590,'r'],[11,589,591,588,594,'r'],[12,591,592,590,593,'k'],[13,592,593,591,594,'k'],[14,590,591,590,592,'k'],
    [15,591,592,590,593,'k'],[16,592,593,591,595,'k'],[17,591,592,590,593,'k'],[18,592,593,591,593,'k'],[19,592,593,591,593,'k'],
    [20,591,593,590,594,'g'],[21,592,592,591,593,'k'],[22,592,592,590,594,'k'],[23,590,591,589,592,'k'],[24,585,589,582,591,'g'],
    [25,583,585,583,586,'k'],[26,583,585,583,586,'r'],[27,585,587,585,588,'r'],[28,588,589,586,590,'k'],[29,588,588,586,589,'k'],
    [30,588,588,587,589,'k'],[31,586,587,586,588,'k'],[32,587,587,586,588,'k'],[33,587,588,586,588,'k'],[34,589,590,588,591,'k'],
    [35,589,591,588,592,'r'],[36,590,591,589,592,'k'],[37,590,591,589,592,'k'],[38,588,589,586,589,'k'],[39,588,589,588,590,'k'],
    [40,588,589,587,590,'k'],[41,588,588,587,589,'k'],[42,588,589,587,590,'k'],[43,588,589,587,590,'k'],[44,589,590,588,591,'k'],
    [45,589,589,588,590,'k'],[46,588,589,587,590,'k'],[47,589,590,588,591,'k'],[48,589,589,588,590,'k'],[49,589,590,588,591,'k'],
    [50,590,590,589,591,'k'],[51,590,591,589,592,'k'],[52,590,591,589,592,'k'],[53,590,591,589,592,'k'],
    [54,585,589,583,591,'g'],[55,564,584,564,587,'g'],[56,564,568,560,579,'r'],[57,568,574,565,576,'r'],[58,569,574,566,578,'g'],
    [59,569,571,563,572,'r'],[60,571,573,571,575,'r'],[61,572,573,571,575,'k'],[62,568,572,565,574,'g'],[63,568,568,562,572,'k'],
    [64,550,568,548,571,'g'],[65,550,557,549,561,'r'],[66,546,557,540,558,'g'],[67,546,546,541,552,'k'],[68,544,552,543,563,'r'],
    [69,552,554,552,564,'r'],[70,547,553,545,556,'g'],[71,540,548,537,558,'g'],[72,515,538,506,538,'g'],[73,478,515,476,515,'g'],
    [74,466,475,444,491,'g'],[75,421,459,375,473,'g'],[76,365,403,353,419,'g'],[77,354,376,342,410,'r'],[78,362,427,315,427,'r'],
    [79,414,432,401,442,'g'],[80,405,414,337,416,'r'],[81,392,409,384,429,'g'],[82,212,382,185,382,'g'],[83,203,306,176,306,'r'],
    [84,320,332,279,332,'r'],[85,285,332,269,339,'g'],[86,282,316,279,316,'r'],[87,316,339,316,339,'r'],[88,351,388,351,410,'r'],
    [89,351,384,344,400,'g'],[90,318,352,318,352,'g'],[91,309,314,291,328,'g'],[92,311,382,299,382,'r'],[93,305,384,305,395,'g']
  ];
  var candles = document.getElementById('candles');
  bars.forEach(function (b) {
    var x = cx(b[0]);
    el(candles, 'path', { 'class': 'wick', d: 'M' + (x + 0.5) + ' ' + b[3] + 'V' + (b[4] + 1) });
    if (b[1] === b[2]) {
      el(candles, 'path', { 'class': 'wick', d: 'M' + (x - 5) + ' ' + (b[1] + 0.5) + 'h11' });
    } else {
      el(candles, 'rect', { 'class': 'body-' + b[5], x: x - 4.5, y: b[1] + 0.5, width: 10, height: b[2] - b[1] });
    }
  });

  // MACD histogram tops, index → y
  var hist = {
    8:785,9:783,10:783,11:783,12:784,13:784,14:784,15:784,16:784,17:786,18:786,19:786,20:786,21:786,22:786,23:786,24:786,25:786,
    26:786,27:786,28:787,29:787,30:787,31:787,32:787,33:787,34:787,35:787,36:788,37:788,38:788,39:788,40:788,41:788,42:788,54:788,
    55:787,56:787,57:787,58:787,59:787,60:786,61:786,62:784,63:784,64:782,65:782,66:781,67:781,68:781,69:780,70:778,71:775,72:770,
    73:765,74:757,75:738,76:721,77:710,78:710,79:709,80:709,81:707,82:681,83:675,84:675,85:670,86:671,87:677,88:690,89:696,90:692,
    91:698,92:710,93:709
  };
  var macd = document.getElementById('macd');
  var d = '';
  for (var n in hist) d += 'M' + (cx(+n) + 0.5) + ' ' + hist[n] + 'V789';
  el(macd, 'path', { 'class': 'hist', d: d });

  // RSI: y values by bar
  var early = [681,686,690,692,686,680,673,668,664,662,662,680,697,695,695,699,699,700,699,702,699,703,700,693,685,683,685,692,695,697,696,698,700,705,710,710,710,703,703,703,698,703,706,711,709,711,708,708,710,713,712,705,703,695,680,672,680,690,688,691,695,693,688,686,680,690,684,682,683,690,692,691,685,678,672];
  var late = [816,812.7,818,841.7,841,840,835.7,821,842,848,844,850,853,861,856.7,853,852,863,854];
  var pts = early.map(function (y, i) { return (cx(i) + 0.5) + ',' + (y * 1.2245).toFixed(1); });
  late.forEach(function (y, i) { pts.push((cx(i + 75) + 0.5) + ',' + y); });
  document.getElementById('rsi').setAttribute('points', pts.join(' '));

  // time-strip ticks
  var strip = document.getElementById('strip-ticks');
  for (var t = 0; t < 24; t++) {
    var tx = 5 + 64 * t;
    el(strip, 'rect', { 'class': 'tick-a', x: tx, y: 648, width: 1, height: 7 });
    el(strip, 'rect', { 'class': 'tick-b', x: tx + 1, y: 648, width: 1, height: 7 });
  }

  // anchor points of the drawn objects
  var handles = document.getElementById('handles');
  [[7,265],[7,293],[1845,265],[1845,293],[1444,167],[1444,652],[1332,165],[1429,259],[1525,353],[1300,278],[1396,385],[1492,491]].forEach(function (p) {
    el(handles, 'rect', { 'class': 'handle', x: p[0] - 2, y: p[1] - 1.5, width: 4, height: 4 });
  });
})();
```
